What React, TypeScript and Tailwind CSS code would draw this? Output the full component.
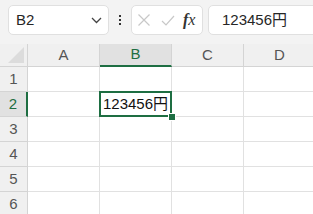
import React from "react";

const font = { fontFamily: '"Liberation Sans", "Noto Sans CJK JP", sans-serif' };

export default function App() {
  const cols = ["A", "B", "C", "D"];
  const rows = [1, 2, 3, 4, 5, 6];
  return (
    <div className="w-[313px] h-[214px] overflow-hidden bg-white" style={font}>
      {/* Toolbar */}
      <div className="h-[44px] bg-[#f3f3f3] flex items-start pt-[5px]">
        <div className="ml-[8px] w-[101px] h-[30px] bg-white border border-[#e0e0e0] rounded-[5px] flex items-center pl-[7px] pr-[6px]">
          <span className="text-[15px] text-[#262626] flex-1">B2</span>
          <svg width="11" height="7" viewBox="0 0 11 7" className="text-[#444]">
            <path d="M1 1 L5.5 5.5 L10 1" fill="none" stroke="currentColor" strokeWidth="1.3" />
          </svg>
        </div>
        <div className="w-[22px] h-[30px] flex flex-col items-center justify-center gap-[2px]">
          <span className="w-[2px] h-[2px] bg-[#333]" />
          <span className="w-[2px] h-[2px] bg-[#333]" />
          <span className="w-[2px] h-[2px] bg-[#333]" />
        </div>
        <div className="w-[72px] h-[30px] bg-white border border-[#e0e0e0] rounded-[5px] flex items-center pl-[5px]">
          <svg width="14" height="14" viewBox="0 0 14 14" className="text-[#c8c8c8]">
            <path d="M1.5 1.5 L12.5 12.5 M12.5 1.5 L1.5 12.5" fill="none" stroke="currentColor" strokeWidth="1.2" />
          </svg>
          <svg width="14" height="14" viewBox="0 0 14 14" className="ml-[10px] text-[#c8c8c8]">
            <path d="M1 8 L5 12 L13 3" fill="none" stroke="currentColor" strokeWidth="1.2" />
          </svg>
          <span
            className="ml-[8px] text-[16px] italic text-[#333] leading-none"
            style={{ fontFamily: '"Liberation Serif", serif' }}
          >
            <span className="font-bold">f</span>x
          </span>
        </div>
        <div className="ml-[5px] flex-1 -mr-[10px] h-[30px] bg-white border border-[#e0e0e0] rounded-[5px] flex items-center pl-[13px]">
          <span className="text-[15px] text-[#262626]">123456円</span>
        </div>
      </div>

      {/* Grid */}
      <div className="grid grid-cols-[28px_72px_72px_72px_72px] grid-rows-[23px_25px_25px_25px_25px_25px_25px]">
        <div className="bg-[#f0f0f0] border-r border-b border-[#d4d4d4] relative">
          <div className="absolute right-[3px] bottom-[3px] w-0 h-0 border-l-[16px] border-l-transparent border-b-[16px] border-b-[#dcdcdc]" />
        </div>
        {cols.map((c) => (
          <div
            key={c}
            className={
              c === "B"
                ? "bg-[#e1e1e1] border-r border-[#d4d4d4] border-b-2 border-b-[#1e6e42] flex items-center justify-center text-[15px] text-[#1e6e42]"
                : "bg-[#f0f0f0] border-r border-b border-[#d4d4d4] flex items-center justify-center text-[15px] text-[#555]"
            }
          >
            {c}
          </div>
        ))}
        {rows.map((r) => (
          <React.Fragment key={r}>
            <div
              className={
                r === 2
                  ? "bg-[#e1e1e1] border-b border-[#d4d4d4] border-r-2 border-r-[#1e6e42] flex items-center justify-center text-[15px] text-[#1e6e42]"
                  : "bg-[#f0f0f0] border-r border-b border-[#d4d4d4] flex items-center justify-center text-[15px] text-[#555]"
              }
            >
              {r}
            </div>
            {cols.map((c) => (
              <div key={c} className="border-r border-b border-[#e1e1e1] relative">
                {r === 2 && c === "B" && (
                  <>
                    <div className="absolute -left-[1px] -top-[1px] -right-[1px] -bottom-[1px] border-2 border-[#1e6e42] flex items-center pl-[2px]">
                      <span className="text-[15px] text-[#111]">123456円</span>
                    </div>
                    <div className="absolute z-10 -right-[5px] -bottom-[5px] w-[8px] h-[8px] bg-[#1e6e42] border border-white" />
                  </>
                )}
              </div>
            ))}
          </React.Fragment>
        ))}
      </div>
    </div>
  );
}
